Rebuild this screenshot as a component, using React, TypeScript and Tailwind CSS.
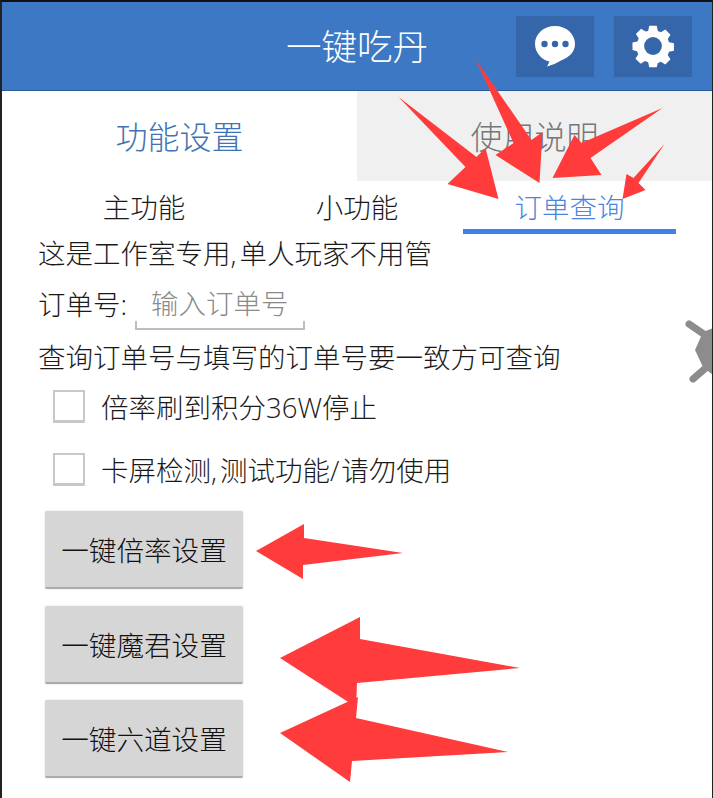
import React from "react";

const font = { fontFamily: '"Open Sans", "Noto Sans CJK SC", "Liberation Sans", sans-serif' };

function Check({ children, className }: { children: React.ReactNode; className: string }) {
  return (
    <div className={`flex items-center ${className}`}>
      <div className="ml-[15px] h-[33px] w-[32px] shrink-0 border-2 border-b-[3px] border-[#c8c8c8] bg-white" />
      <span className="ml-[16px] pt-[4px] text-[27.5px] leading-[36px] text-[#1a1a1a]">{children}</span>
    </div>
  );
}

function Btn({ label, className = "" }: { label: string; className?: string }) {
  return (
    <button className={`ml-[7px] flex h-[78px] w-[198px] items-center justify-center rounded-[2px] border-b-2 border-[#ababab] bg-[#d6d6d6] pt-[3px] text-[27.6px] text-[#111] shadow-[0_0_2px_rgba(0,0,0,0.15)] ${className}`}>
      {label}
    </button>
  );
}

export default function App() {
  return (
    <div style={font} className="relative h-[798px] w-[713px] overflow-hidden border-l-2 border-r border-t-2 border-l-[#222] border-r-[#222] border-t-[#111] bg-white">
      <header className="relative flex h-[89px] items-center justify-end border-b border-[#2a5c9c] bg-[#3c78c3]">
        <h1 className="absolute left-[284px] top-[21px] text-[35.5px] leading-[46px] font-light text-white">一键吃丹</h1>
        <div className="mr-[20px] flex gap-[20px]">
          <div className="flex h-[61px] w-[78px] items-center justify-center bg-[#3566a9]">
            <svg width="44" height="44" viewBox="0 0 44 44">
              <path d="M22 2C10.5 2 2 10 2 20c0 9 7 16 14.5 17.5L14 42.5c5-1.5 10-3.500 14-6C36 33.500 42 28 42 20 42 10 33.500 2 22 2z" fill="#fff" />
              <circle cx="11.500" cy="20" r="3.200" fill="#3566a9" />
              <circle cx="22" cy="20" r="3.200" fill="#3566a9" />
              <circle cx="32.500" cy="20" r="3.200" fill="#3566a9" />
            </svg>
          </div>
          <div className="flex h-[61px] w-[78px] items-center justify-center bg-[#3566a9]">
            <svg width="44" height="44" viewBox="0 0 42 42">
              <path
                fillRule="evenodd"
                fill="#fff"
                d="M17 1.500h8l1.200 5.500 3.300 1.400 4.700-3 5.600 5.600-3 4.700 1.400 3.300 5.300 1.200v8l-5.300 1.200-1.400 3.300 3 4.700-5.600 5.600-4.700-3-3.300 1.400L25 46h-8l-1.200-5.300-3.300-1.400-4.700 3-5.600-5.600 3-4.700-1.400-3.300L-1 27.500v-8l5.300-1.200 1.400-3.300-3-4.700 5.600-5.600 4.700 3L15.800 7z"
                transform="translate(2.300 0.400) scale(0.89)"
              />
              <circle cx="21" cy="21" r="8.500" fill="#3566a9" />
            </svg>
          </div>
        </div>
      </header>

      <div className="flex h-[90px]">
        <div className="flex w-[355px] items-center justify-center pt-[2px] text-[32px] font-light text-[#3f73b3]">功能设置</div>
        <div className="flex flex-1 items-center justify-center bg-[#f0f0f0] pt-[2px] text-[32px] font-light text-[#777]">使用说明</div>
      </div>

      <div className="flex h-[53px] text-[27.5px] font-light text-[#1a1a1a]">
        <div className="flex w-[284px] items-center justify-center pt-[1px]">主功能</div>
        <div className="flex w-[142px] items-center justify-center pt-[1px]">小功能</div>
        <div className="ml-[35px] flex w-[213px] items-center justify-center border-b-[5px] border-[#3f80ea] pt-[6px] text-[#4a86e0]">订单查询</div>
      </div>

      <div className="text-[27.5px] font-light text-[#1a1a1a]">
        <p className="ml-[36px] h-[38px] leading-[40px]">这是工作室专用<span className="mr-[3px]">,</span>单人玩家不用管</p>
        <div className="ml-[36px] mt-[12px] flex h-[46px] items-start">
          <span className="leading-[42px]">订单号:</span>
          <div className="relative ml-[8px] h-[46px] w-[170px] border-b-2 border-[#bdbdbd] pl-[16px] leading-[40px] text-[#8a8a8a]">
            输入订单号
            <span className="absolute bottom-0 left-0 h-[7px] w-[2px] bg-[#bdbdbd]" />
            <span className="absolute bottom-0 right-0 h-[7px] w-[2px] bg-[#bdbdbd]" />
          </div>
        </div>
        <p className="ml-[36px] mt-[8px] h-[36px] leading-[40px]">查询订单号与填写的订单号要一致方可查询</p>
        <Check className="ml-[36px] mt-[14px] h-[36px]">倍率刷到积分36W停止</Check>
        <Check className="ml-[36px] mt-[27px] h-[36px]">
          卡屏检测<span className="mr-[3px]">,</span>测试功能<span className="mr-[2px]">/</span>请勿使用
        </Check>
        <div className="mt-[24px] ml-[36px] flex flex-col">
          <Btn label="一键倍率设置" />
          <Btn label="一键魔君设置" className="mt-[17px]" />
          <Btn label="一键六道设置" className="mt-[16px]" />
        </div>
      </div>

      {/* floating widget at the right edge and hand-drawn annotation arrows */}
      <svg className="pointer-events-none absolute left-[-2px] top-[-2px]" width="713" height="798" viewBox="0 0 713 798">
        <g stroke="#8c8c8c" strokeWidth="7" strokeLinecap="round">
          <line x1="689" y1="324" x2="708" y2="337" />
          <line x1="693" y1="379" x2="708" y2="366" />
        </g>
        <polygon points="703,332 713,328 713,375 703,367 695,350" fill="#8c8c8c" />
        <g fill="#ff3b3b" transform="translate(-0.5 0)">
          <polygon points="399,97 477,157 486,148 499,199 448,184 466,167" />
          <polygon points="476,59 532,140 543,132 540,183 496,155 514,143" />
          <polygon points="663,108 582,143 575,135 553,178 602,175 591,158" />
          <polygon points="665,144 634,178 627,174 623,199 646,190 639,183" />
        </g>
        <g fill="#ff3b3b" transform="translate(-2 0)">
          <polygon points="258,551 306,524 306,538 405,553 305,565 305,579" />
          <polygon points="282,658 362,617 362,639 522,668 359,683 358,707" />
          <polygon points="282,733 360,697 358,718 510,752 354,761 352,782" />
        </g>
      </svg>
    </div>
  );
}
